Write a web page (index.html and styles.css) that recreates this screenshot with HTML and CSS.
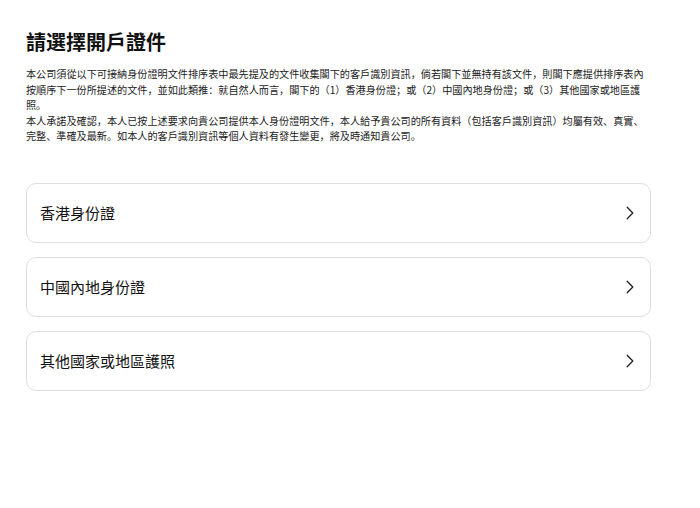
FILE: index.html
```html
<!DOCTYPE html>
<html lang="zh">
<head>
<meta charset="utf-8">
<title>請選擇開戶證件</title>
<link rel="stylesheet" href="styles.css">
</head>
<body>
<main class="page">
  <h1 class="title">請選擇開戶證件</h1>
  <div class="notice">
    <p>本公司須從以下可接納身份證明文件排序表中最先提及的文件收集閣下的客戶識別資訊，倘若閣下並無持有該文件，則閣下應提供排序表內按順序下一份所提述的文件，並如此類推：就自然人而言，閣下的（1）香港身份證；或（2）中國內地身份證；或（3）其他國家或地區護照。</p>
    <p>本人承諾及確認，本人已按上述要求向貴公司提供本人身份證明文件，本人給予貴公司的所有資料（包括客戶識別資訊）均屬有效、真實、完整、準確及最新。如本人的客戶識別資訊等個人資料有發生變更，將及時通知貴公司。</p>
  </div>
  <ul class="options">
    <li class="option"><span class="option-label">香港身份證</span><svg class="chev" viewBox="0 0 8 14" width="8" height="14"><path d="M1.2 1.2 L6.8 7 L1.2 12.8" fill="none" stroke="#222" stroke-width="1.3" stroke-linecap="round" stroke-linejoin="round"/></svg></li>
    <li class="option"><span class="option-label">中國內地身份證</span><svg class="chev" viewBox="0 0 8 14" width="8" height="14"><path d="M1.2 1.2 L6.8 7 L1.2 12.8" fill="none" stroke="#222" stroke-width="1.3" stroke-linecap="round" stroke-linejoin="round"/></svg></li>
    <li class="option"><span class="option-label">其他國家或地區護照</span><svg class="chev" viewBox="0 0 8 14" width="8" height="14"><path d="M1.2 1.2 L6.8 7 L1.2 12.8" fill="none" stroke="#222" stroke-width="1.3" stroke-linecap="round" stroke-linejoin="round"/></svg></li>
  </ul>
</main>
</body>
</html>
```

FILE: styles.css
```css
html, body {
  margin: 0;
  padding: 0;
  background: #ffffff;
}
body {
  font-family: "Noto Sans CJK SC", "Noto Sans CJK TC", "Noto Sans", sans-serif;
  color: #111;
}
.page {
  width: 625px;
  padding: 28px 0 0 26px;
}
.title {
  margin: 0;
  font-size: 20px;
  line-height: 28px;
  font-weight: 700;
  color: #111;
}
.notice {
  margin-top: 10px;
  font-size: 10.15px;
  line-height: 15.5px;
  color: #1a1a1a;
}
.notice p {
  margin: 0;
}
.options {
  list-style: none;
  margin: 39px 0 0 0;
  padding: 0;
  display: flex;
  flex-direction: column;
  gap: 14px;
}
.option {
  box-sizing: border-box;
  height: 60px;
  border: 1px solid #dedede;
  border-radius: 10px;
  display: flex;
  align-items: center;
  justify-content: space-between;
  padding: 0 16px 0 13px;
}
.option-label {
  font-size: 15px;
  color: #111;
}
.chev {
  display: block;
}
```
